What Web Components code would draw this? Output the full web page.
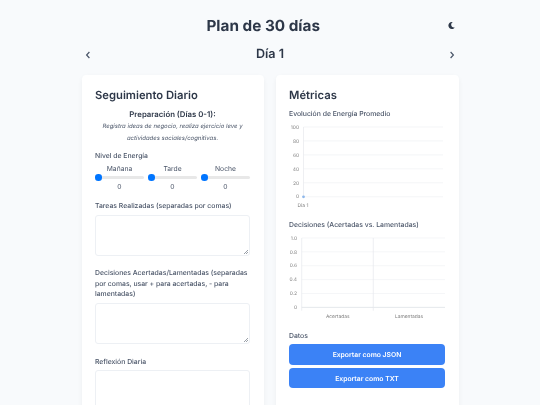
<!DOCTYPE html>
<html lang="es">
<head>
<meta charset="utf-8">
<title>Plan de 30 días</title>
<style>
  html, body { margin: 0; height: 100%; overflow: hidden; background: #f8fafc; }
  body { font-family: Inter, "Noto Sans", sans-serif; color: #2d3748; text-rendering: geometricPrecision; }
</style>
</head>
<body>
<plan-app></plan-app>
<script>
const BASE = `
  * { box-sizing: border-box; }
  p, h1, h2, h3 { margin: 0; }
`;

class PlanCard extends HTMLElement {
  constructor() {
    super();
    this.attachShadow({ mode: "open" });
  }

  connectedCallback() {
    this.shadowRoot.innerHTML = `
      <style>
        ${BASE}
        :host { display: block; background: #fff; border-radius: 4.5px; padding: 13px 13.5px; box-shadow: 0 2px 5px rgba(15, 23, 42, .05); }
        h2 { font-size: 11.25px; line-height: 14px; font-weight: 600; color: #2d3748; margin-bottom: 6.5px; }
      </style>
      <h2>${this.getAttribute("heading")}</h2>
      <slot></slot>
    `;
  }
}

class EnergySlider extends HTMLElement {
  constructor() {
    super();
    this.attachShadow({ mode: "open" });
  }

  connectedCallback() {
    this.shadowRoot.innerHTML = `
      <style>
        ${BASE}
        :host { display: block; flex: 1; min-width: 0; text-align: center; font-size: 6.75px; color: #4a5568; }
        label { display: block; line-height: 8px; }
        input { -webkit-appearance: none; appearance: none; display: block; width: 100%; height: 7px; margin: 1px 0 .5px; background: transparent; }
        input::-webkit-slider-runnable-track { height: 2.8px; background: #e8e8e8; border-radius: 2px; }
        input::-webkit-slider-thumb { -webkit-appearance: none; width: 6.6px; height: 6.6px; margin-top: -1.9px; border-radius: 50%; background: #0075ff; }
        span { display: block; line-height: 9px; }
      </style>
      <label>${this.getAttribute("label")}</label>
      <input type="range" min="0" max="10" value="0">
      <span>0</span>
    `;
  }
}

class TextField extends HTMLElement {
  constructor() {
    super();
    this.attachShadow({ mode: "open" });
  }

  connectedCallback() {
    this.shadowRoot.innerHTML = `
      <style>
        ${BASE}
        :host { display: block; margin-bottom: 12.8px; }
        label { display: block; font-size: 6.85px; line-height: 10.4px; font-weight: 500; color: #4a5568; margin-bottom: 3.3px; }
        textarea { display: block; width: 100%; height: 41px; border: 1px solid #edf0f4; border-radius: 3px; background: #fff; font: inherit; }
        textarea::-webkit-resizer {
          background: linear-gradient(135deg, transparent 0 50%, #9aa0a8 50% 60%, transparent 60% 74%, #9aa0a8 74% 84%, transparent 84%) right 1px bottom 1px / 4px 4px no-repeat;
        }
      </style>
      <label>${this.getAttribute("label")}</label>
      <textarea></textarea>
    `;
  }
}

class LineChart extends HTMLElement {
  constructor() {
    super();
    this.attachShadow({ mode: "open" });
  }

  connectedCallback() {
    const ticks = [100, 80, 60, 40, 20, 0];
    const rows = ticks.map((t, i) => {
      const y = 3 + i * 13.95;
      return `<line x1="14.5" x2="154" y1="${y}" y2="${y}" stroke="#eff1f4" stroke-width=".7"/>
        <text x="10" y="${y + 1.7}" text-anchor="end">${t}</text>`;
    }).join("");
    this.shadowRoot.innerHTML = `
      <style>
        :host { display: block; }
        svg { display: block; }
        text { font-size: 4.9px; fill: #7c7c7c; font-family: Inter, sans-serif; }
      </style>
      <svg width="156" height="86" viewBox="0 0 156 86">
        ${rows}
        <line x1="14.5" x2="14.5" y1="3" y2="73" stroke="#e6e8ec" stroke-width=".7"/>
        <circle cx="14.5" cy="72.8" r="1.4" fill="#8fb8ea"/>
        <text x="14" y="83" text-anchor="middle">Día 1</text>
      </svg>
    `;
  }
}

class BarChart extends HTMLElement {
  constructor() {
    super();
    this.attachShadow({ mode: "open" });
  }

  connectedCallback() {
    const ticks = ["1.0", "0.8", "0.6", "0.4", "0.2", "0"];
    const rows = ticks.map((t, i) => {
      const y = 3 + i * 13.87;
      const c = i === 5 ? "#d9dce1" : "#f1f2f5";
      return `<line x1="12.7" x2="156" y1="${y}" y2="${y}" stroke="${c}" stroke-width=".7"/>
        <text x="8" y="${y + 1.7}" text-anchor="end">${t}</text>`;
    }).join("");
    this.shadowRoot.innerHTML = `
      <style>
        :host { display: block; }
        svg { display: block; }
        text { font-size: 4.9px; fill: #7c7c7c; font-family: Inter, sans-serif; }
      </style>
      <svg width="156" height="88" viewBox="0 0 156 88">
        ${rows}
        <line x1="12.7" x2="12.7" y1="3" y2="75.7" stroke="#e6e8ec" stroke-width=".7"/>
        <line x1="84.3" x2="84.3" y1="3" y2="75.7" stroke="#e6e8ec" stroke-width=".7"/>
        <text x="48.7" y="82.7" text-anchor="middle">Acertadas</text>
        <text x="120" y="82.7" text-anchor="middle">Lamentadas</text>
      </svg>
    `;
  }
}

class ExportButton extends HTMLElement {
  constructor() {
    super();
    this.attachShadow({ mode: "open" });
  }

  connectedCallback() {
    this.shadowRoot.innerHTML = `
      <style>
        ${BASE}
        :host { display: block; }
        button { display: block; width: 100%; height: 20.6px; border: 0; border-radius: 4px; background: #3b82f6; color: #fff; font: 600 6.8px Inter, sans-serif; padding: 0; text-rendering: geometricPrecision; }
      </style>
      <button><slot></slot></button>
    `;
  }
}

class PlanApp extends HTMLElement {
  constructor() {
    super();
    this.attachShadow({ mode: "open" });
  }

  connectedCallback() {
    this.shadowRoot.innerHTML = `
      <style>
        ${BASE}
        /* the reference is a downscaled capture: grey, soft text rather than LCD fringes */
        :host { display: block; width: 377px; margin: 0 auto; padding-top: 15.5px; filter: blur(.3px); }
        .top { display: flex; align-items: center; height: 20px; }
        h1 { flex: 1; text-align: center; font-size: 15.3px; line-height: 20px; font-weight: 700; color: #2d3748; }
        .theme { width: 13.6px; display: flex; justify-content: center; }
        .moon { width: 7px; height: 7px; display: block; }
        .nav { display: flex; align-items: center; justify-content: space-between; height: 16px; margin-top: 11px; padding: 0 3.5px; }
        .nav svg { display: block; width: 6px; height: 8px; }
        .nav h2 { font-size: 12.6px; line-height: 16px; font-weight: 600; color: #2d3748; }
        .cols { display: grid; grid-template-columns: 1fr 1fr; gap: 12px; margin-top: 12.5px; align-items: stretch; }
        .phase { text-align: center; padding-top: .5px; margin-bottom: 6.5px; }
        .phase h3 { font-size: 7.8px; line-height: 10px; font-weight: 600; color: #2d3748; }
        .phase p { font-size: 6px; line-height: 12px; font-style: italic; color: #4a5568; margin-top: 1.5px; }
        .sub { font-size: 6.85px; line-height: 10px; font-weight: 500; color: #4a5568; }
        .energy { margin-bottom: 10.3px; }
        .sliders { display: flex; gap: 4px; margin-top: 4px; }
        .chart-title { margin-bottom: 5px; }
        .block { margin-bottom: 10.5px; }
        .block.last { margin-bottom: 8px; }
        .btns { display: flex; flex-direction: column; gap: 3px; margin-top: 3.3px; padding-bottom: 40px; }
      </style>
      <div class="top">
        <h1>Plan de 30 días</h1>
        <div class="theme">
          <svg class="moon" viewBox="0 0 512 512"><path fill="#2d3748" d="M283.2 512c79 0 151.1-35.9 198.9-94.8 7.1-8.7-.6-21.4-11.6-19.4-124.2 23.7-238.3-71.6-238.3-197 0-72.2 38.7-138.6 101.5-174.4 9.7-5.5 7.3-20.2-3.8-22.2A258 258 0 0 0 283.2 0c-141.3 0-256 114.5-256 256 0 141.3 114.5 256 256 256z"/></svg>
        </div>
      </div>
      <div class="nav">
        <svg viewBox="0 0 6 8"><path d="M4.4 1 1.6 4l2.8 3" fill="none" stroke="#4a5568" stroke-width="1.2"/></svg>
        <h2>Día 1</h2>
        <svg viewBox="0 0 6 8"><path d="M1.6 1 4.4 4 1.6 7" fill="none" stroke="#4a5568" stroke-width="1.2"/></svg>
      </div>
      <div class="cols">
        <plan-card heading="Seguimiento Diario">
          <div class="phase">
            <h3>Preparación (Días 0-1):</h3>
            <p>Registra ideas de negocio, realiza ejercicio leve y actividades sociales/cognitivas.</p>
          </div>
          <div class="energy">
            <p class="sub">Nivel de Energía</p>
            <div class="sliders">
              <energy-slider label="Mañana"></energy-slider>
              <energy-slider label="Tarde"></energy-slider>
              <energy-slider label="Noche"></energy-slider>
            </div>
          </div>
          <text-field label="Tareas Realizadas (separadas por comas)"></text-field>
          <text-field label="Decisiones Acertadas/Lamentadas (separadas por comas, usar + para acertadas, - para lamentadas)"></text-field>
          <text-field label="Reflexión Diaria"></text-field>
        </plan-card>
        <plan-card heading="Métricas">
          <div class="block">
            <p class="sub chart-title">Evolución de Energía Promedio</p>
            <line-chart></line-chart>
          </div>
          <div class="block last">
            <p class="sub chart-title">Decisiones (Acertadas vs. Lamentadas)</p>
            <bar-chart></bar-chart>
          </div>
          <p class="sub">Datos</p>
          <div class="btns">
            <export-button>Exportar como JSON</export-button>
            <export-button>Exportar como TXT</export-button>
          </div>
        </plan-card>
      </div>
    `;
  }
}

window.customElements.define("plan-card", PlanCard);
window.customElements.define("energy-slider", EnergySlider);
window.customElements.define("text-field", TextField);
window.customElements.define("line-chart", LineChart);
window.customElements.define("bar-chart", BarChart);
window.customElements.define("export-button", ExportButton);
window.customElements.define("plan-app", PlanApp);
</script>
</body>
</html>
